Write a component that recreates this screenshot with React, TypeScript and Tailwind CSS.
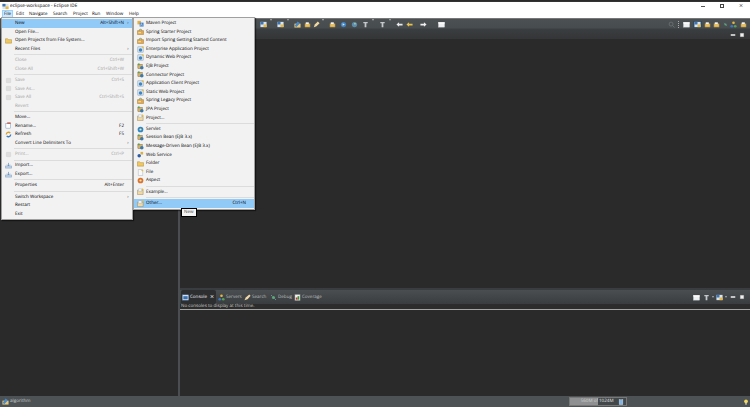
import React from 'react';

type MenuRow = { label?: string; key?: string; icon?: string; off?: boolean; arrow?: boolean; hot?: boolean; sep?: boolean };

const fileMenu: MenuRow[] = [
  { label: 'New', key: 'Alt+Shift+N', arrow: true, hot: true },
  { label: 'Open File...' },
  { label: 'Open Projects from File System...', icon: 'folder' },
  { label: 'Recent Files', arrow: true },
  { sep: true },
  { label: 'Close', key: 'Ctrl+W', off: true },
  { label: 'Close All', key: 'Ctrl+Shift+W', off: true },
  { sep: true },
  { label: 'Save', key: 'Ctrl+S', off: true, icon: 'disk' },
  { label: 'Save As...', off: true, icon: 'disk' },
  { label: 'Save All', key: 'Ctrl+Shift+S', off: true, icon: 'disk' },
  { label: 'Revert', off: true },
  { sep: true },
  { label: 'Move...' },
  { label: 'Rename...', key: 'F2', icon: 'rename' },
  { label: 'Refresh', key: 'F5', icon: 'refresh' },
  { label: 'Convert Line Delimiters To', arrow: true },
  { sep: true },
  { label: 'Print...', key: 'Ctrl+P', off: true, icon: 'disk' },
  { sep: true },
  { label: 'Import...', icon: 'import' },
  { label: 'Export...', icon: 'import' },
  { sep: true },
  { label: 'Properties', key: 'Alt+Enter' },
  { sep: true },
  { label: 'Switch Workspace', arrow: true },
  { label: 'Restart' },
  { label: 'Exit' },
];

const newMenu: MenuRow[] = [
  { label: 'Maven Project', icon: 'maven' },
  { label: 'Spring Starter Project', icon: 'spring' },
  { label: 'Import Spring Getting Started Content', icon: 'spring' },
  { label: 'Enterprise Application Project', icon: 'globe' },
  { label: 'Dynamic Web Project', icon: 'globe' },
  { label: 'EJB Project', icon: 'bean' },
  { label: 'Connector Project', icon: 'bean' },
  { label: 'Application Client Project', icon: 'globe' },
  { label: 'Static Web Project', icon: 'globe' },
  { label: 'Spring Legacy Project', icon: 'spring' },
  { label: 'JPA Project', icon: 'bean' },
  { label: 'Project...', icon: 'newdoc' },
  { sep: true },
  { label: 'Servlet', icon: 'servlet' },
  { label: 'Session Bean (EJB 3.x)', icon: 'bean' },
  { label: 'Message-Driven Bean (EJB 3.x)', icon: 'bean' },
  { label: 'Web Service', icon: 'service' },
  { label: 'Folder', icon: 'folder' },
  { label: 'File', icon: 'file' },
  { label: 'Aspect', icon: 'aspect' },
  { sep: true },
  { label: 'Example...', icon: 'newdoc' },
  { sep: true },
  { label: 'Other...', key: 'Ctrl+N', icon: 'newdoc', hot: true },
];

// tiny stand-ins for the eclipse 16px icons, they only show as colour blobs at this scale
function Ico({ kind, size = 7 }: { kind: string; size?: number }) {
  const s = { width: size, height: size };
  const svg = (children: React.ReactNode) => (
    <svg viewBox="0 0 16 16" style={s} className="shrink-0">
      {children}
    </svg>
  );
  switch (kind) {
    case 'folder':
      return svg(<path d="M1 4h5l2 2h7v8H1z" fill="#f0c860" stroke="#a8842c" />);
    case 'disk':
      return svg(<rect x="3" y="3" width="10" height="10" rx="1" fill="#dedede" stroke="#cfcfcf" />);
    case 'rename':
      return svg(<><rect x="2" y="3" width="11" height="11" fill="#fff" stroke="#5a88b8" /><path d="M5 1h8v3H5z" fill="#c0503c" /></>);
    case 'refresh':
      return svg(<><path d="M3 8a5 5 0 0 1 9-3" fill="none" stroke="#d8a030" strokeWidth="3" /><path d="M13 8a5 5 0 0 1-9 3" fill="none" stroke="#3c7cc0" strokeWidth="3" /></>);
    case 'import':
      return svg(<><path d="M1 9h14v5H1z" fill="#c4d6ea" stroke="#6a90b8" /><path d="M8 2v7M5 6l3 3 3-3" fill="none" stroke="#5a86b4" strokeWidth="1.5" /></>);
    case 'maven':
      return svg(<><rect x="1" y="2" width="8" height="8" fill="#e8b040" /><rect x="6" y="6" width="9" height="9" fill="#4a84c8" /><path d="M8 13l2-5 2 5" stroke="#fff" fill="none" /></>);
    case 'spring':
      return svg(<><path d="M1 6h14v9H1z" fill="#e0a850" stroke="#9c7430" /><path d="M5 6a3 3 0 0 1 6 0" fill="none" stroke="#7c8c50" strokeWidth="2" /><rect x="3" y="9" width="6" height="3" fill="#f4d890" /></>);
    case 'globe':
      return svg(<><rect x="2" y="2" width="12" height="12" fill="#e0e8f0" stroke="#6888a8" /><circle cx="8" cy="9" r="4" fill="#3c84c4" /><path d="M11 1h4v4h-4z" fill="#e8c048" /></>);
    case 'bean':
      return svg(<><rect x="2" y="3" width="10" height="10" fill="#d8b068" stroke="#7c6c4c" /><circle cx="11" cy="11" r="4" fill="#3c78a8" /><path d="M2 1h4v4H2z" fill="#58a058" /></>);
    case 'newdoc':
      return svg(<><path d="M1 5h13v10H1z" fill="#f0d8a0" stroke="#8c7c54" /><path d="M3 2h8v5H3z" fill="#fff" stroke="#98a4b0" /><path d="M13 0l1 2 2 1-2 1-1 2-1-2-2-1 2-1z" fill="#e8b830" /></>);
    case 'servlet':
      return svg(<><circle cx="8" cy="8" r="6.5" fill="#2f86c4" /><circle cx="8" cy="8" r="2.5" fill="#f2e6a8" /></>);
    case 'service':
      return svg(<><circle cx="5" cy="11" r="4" fill="#2c5ca8" /><path d="M8 2h6v6H8z" fill="#d8b048" /></>);
    case 'file':
      return svg(<><path d="M3 1h8l2 2v12H3z" fill="#f8f8f8" stroke="#a4aab0" /><path d="M12 0l1 2 2 1-2 1-1 2-1-2-2-1 2-1z" fill="#e8b830" /></>);
    case 'aspect':
      return svg(<><circle cx="8" cy="8" r="6.5" fill="#d8742c" /><circle cx="8" cy="8" r="2.5" fill="#f6e2c0" /></>);
    case 'win':
      return svg(<><rect x="1" y="3" width="14" height="11" fill="#eef0f2" stroke="#c8ccd0" /><rect x="1" y="3" width="14" height="3" fill="#fff" /></>);
    case 'persp':
      return svg(<><rect x="1" y="2" width="14" height="12" fill="#d8e4f0" /><path d="M1 2h7v6H1z" fill="#3c74b4" /><path d="M8 8h7v6H8z" fill="#e8b840" /></>);
    case 'tool':
      return svg(<><path d="M2 6h12v8H2z" fill="#e8c060" stroke="#8c7440" /><path d="M4 3h7v4H4z" fill="#f4f4f4" /></>);
    case 'run':
      return svg(<><circle cx="8" cy="8" r="6" fill="#3f84c4" /><path d="M6 5l5 3-5 3z" fill="#d8e8f4" /></>);
    case 'person':
      return svg(<><circle cx="8" cy="8" r="6" fill="#5c8cb0" /><circle cx="9" cy="6" r="2" fill="#a8d0a0" /></>);
    case 'pin':
      return svg(<><path d="M3 2h10v3H3zM6 5h4v9H6z" fill="#c4c8cc" /></>);
    case 'back':
      return svg(<path d="M1 8l6-5v3h8v4H7v3z" fill="#e8eaec" />);
    case 'backy':
      return svg(<path d="M1 8l6-5v3h8v4H7v3z" fill="#e8c050" />);
    case 'fwd':
      return svg(<path d="M15 8l-6-5v3H1v4h8v3z" fill="#f0f0f0" />);
    case 'pencil':
      return svg(<path d="M2 14l2-6 7-7 4 4-7 7z" fill="#f0d8a0" />);
    case 'min':
      return svg(<rect x="2" y="6" width="12" height="4" fill="#f0f0f0" />);
    case 'max':
      return svg(<rect x="3" y="3" width="10" height="10" fill="#f0f0f0" stroke="#888" />);
    case 'search':
      return svg(<><circle cx="7" cy="7" r="4.5" fill="none" stroke="#6c7072" strokeWidth="2" /><path d="M10 10l5 5" stroke="#6c7072" strokeWidth="2" /></>);
    case 'console':
      return svg(<><rect x="1" y="2" width="14" height="12" fill="#dce6f2" stroke="#5a88c0" /><rect x="3" y="5" width="10" height="7" fill="#3a70b0" /></>);
    case 'servers':
      return svg(<><circle cx="8" cy="4" r="3" fill="#e8b840" /><circle cx="4" cy="12" r="3" fill="#3c78c0" /><circle cx="12" cy="12" r="3" fill="#58a058" /></>);
    case 'flash':
      return svg(<path d="M1 14l3-6 8-7 3 3-7 8z" fill="#f0d8a8" />);
    case 'debug':
      return svg(<><circle cx="8" cy="8" r="3.5" fill="#58a878" /><path d="M3 3l2 2M13 13l-2-2" stroke="#8cb8d0" strokeWidth="2" /></>);
    case 'coverage':
      return svg(<><rect x="2" y="1" width="12" height="14" fill="#f0f0f0" stroke="#707070" /><rect x="4" y="8" width="4" height="5" fill="#c03030" /><rect x="8" y="5" width="4" height="8" fill="#389038" /></>);
    case 'bulb':
      return svg(<><circle cx="8" cy="6" r="5" fill="#f4d860" /><rect x="6" y="11" width="4" height="4" fill="#d8d8d8" /></>);
    case 'trash':
      return svg(<><rect x="3" y="2" width="10" height="13" fill="#86b4e0" stroke="#d8e4f0" /></>);
    case 'pkg':
      return svg(<><path d="M1 6h14v9H1z" fill="#e8c878" /><path d="M8 1l6 4-9 9-3-3z" fill="#4a88c8" /></>);
    default:
      return <span className="w-[7px] shrink-0" />;
  }
}

function Menu({ rows, className, iconX }: { rows: MenuRow[]; className: string; iconX: string }) {
  return (
    <div className={`absolute bg-[#f2f2f2] border border-[#a0a0a0] py-px shadow-[1px_1px_1px_rgba(0,0,0,0.5)] ${className}`}>
      {rows.map((r, i) =>
        r.sep ? (
          <div key={i} className="h-[2.7px] flex items-center pl-[12px]">
            <div className="h-px w-full bg-[#dcdcdc]" />
          </div>
        ) : (
          <div key={i} className={`h-[8.6px] flex items-center ${r.hot ? 'bg-[#91c9f7]' : ''} ${r.off ? 'text-[#a0a0a0]' : 'text-[#000]'}`}>
            <span className={`flex justify-center ${iconX}`}>{r.icon && <Ico kind={r.icon} />}</span>
            <span className="flex-1 whitespace-nowrap">{r.label}</span>
            {r.key && <span className="whitespace-nowrap">{r.key}</span>}
            <span className="w-[8px] text-center text-[#444]">{r.arrow ? '›' : ''}</span>
          </div>
        ),
      )}
    </div>
  );
}

function Drop() {
  return <span className="w-0 h-0 border-x-[1.5px] border-x-transparent border-t-[2px] border-t-[#a8acae]" />;
}

const menus = [
  { name: 'Edit', w: 'w-[13px]' },
  { name: 'Navigate', w: 'w-[24px]' },
  { name: 'Search', w: 'w-[20px]' },
  { name: 'Project', w: 'w-[19px]' },
  { name: 'Run', w: 'w-[14px]' },
  { name: 'Window', w: 'w-[23px]' },
  { name: 'Help', w: 'w-[15px]' },
];

export default function App() {
  return (
    <div
      className="relative w-[750px] h-[407px] overflow-hidden flex flex-col bg-[#2a2a2a] text-[4.55px] leading-none [text-rendering:geometricPrecision]"
      style={{ fontFamily: '"Open Sans", "Liberation Sans", sans-serif' }}
    >
      {/* title bar */}
      <div className="h-[9px] mt-px bg-white flex items-center pl-[2px] shrink-0 border-t border-t-[#333]">
        <Ico kind="persp" />
        <span className="ml-[1px] text-[#000] text-[4.7px]">eclipse-workspace - Eclipse IDE</span>
        <div className="ml-auto flex items-center gap-[15px] pr-[7px]">
          <span className="w-[4px] h-px bg-[#555]" />
          <span className="w-[4px] h-[4px] border border-[#444]" />
          <span className="text-[7px] text-[#333]">×</span>
        </div>
      </div>

      {/* menu bar */}
      <div className="h-[8px] bg-white flex items-center pl-[2px] text-[#000] shrink-0">
        <span className="w-[11px] h-full mr-[3px] flex items-center justify-center bg-[#cce8ff] border border-[#99d1ff]">File</span>
        {menus.map((m) => (
          <span key={m.name} className={m.w}>{m.name}</span>
        ))}
      </div>

      {/* toolbars */}
      <div className="shrink-0 h-[21px] border-t border-t-[#777] bg-[linear-gradient(#4b5052_0%,#474c4e_45%,#3b3e40_50%,#333537_100%)]">
        <div className="h-[11px] flex items-center pl-[256px] pr-[3px]">
          <span className="w-[4px]" />
          <Ico kind="persp" />
          <span className="ml-[3px] mr-[5px]"><Drop /></span>
          <Ico kind="persp" />
          <span className="ml-[3px] mr-[5px]"><Drop /></span>
          <Ico kind="pkg" />
          <span className="w-[3px]" />
          <Ico kind="tool" />
          <span className="w-[2px]" />
          <Ico kind="pencil" />
          <span className="ml-[2px] mr-[5px]"><Drop /></span>
          <Ico kind="tool" />
          <span className="w-[4px]" />
          <Ico kind="run" />
          <span className="w-[4px]" />
          <Ico kind="person" />
          <span className="w-[4px]" />
          <Ico kind="pin" />
          <span className="ml-[3px] mr-[5px]"><Drop /></span>
          <Ico kind="pin" />
          <span className="ml-[3px] mr-[5px]"><Drop /></span>
          <Ico kind="back" />
          <span className="w-[3px]" />
          <Ico kind="backy" />
          <span className="w-[7px]" />
          <Ico kind="fwd" />
          <span className="w-[11px]" />
          <Ico kind="win" />
          <div className="ml-auto flex items-center gap-[2px]">
            <Ico kind="search" />
            <span className="w-px h-[7px] ml-[1px] mr-[2px] border-l border-dotted border-l-[#aaa]" />
            <Ico kind="win" />
            <span className="bg-[#2f4a60] px-[1px] ml-[1px]"><Ico kind="persp" /></span>
            <Ico kind="tool" />
            <Ico kind="tool" />
            <span className="w-[5px] ml-[1px] flex justify-center"><Ico kind="debug" size={5} /></span>
            <Ico kind="servers" />
            <span className="ml-[1px]"><Ico kind="tool" /></span>
          </div>
        </div>
        <div className="h-[9px] flex items-center justify-end gap-[3px] pr-[5px]">
          <Ico kind="min" size={6} />
          <Ico kind="max" size={6} />
        </div>
      </div>

      {/* workbench */}
      <div className="flex-1 min-h-0 flex">
        <div className="w-[178px] bg-[#2a2a2a]" />
        <div className="w-[2px] bg-[#4a4e50]" />
        <div className="flex-1 flex flex-col min-w-0">
          <div className="flex-1 bg-[#2a2a2a]" />
          <div className="h-[2px] bg-[#3a3d3f]" />
          <div className="h-[106px] shrink-0 flex flex-col">
            <div className="h-[14px] shrink-0 flex items-center text-[#b8bcbe] bg-[linear-gradient(#4a4e50,#3a3d3f)] pl-px pr-[5px]">
              <div className="h-full w-[35px] flex items-center gap-[1px] pl-[1px] bg-[#2c2e30] text-[#f0f0f0] rounded-t-[2px]">
                <Ico kind="console" />
                <span>Console</span>
                <span className="ml-[2px] text-[7px] text-white">×</span>
              </div>
              <div className="flex items-center gap-[1px] ml-[2px] w-[26px]"><Ico kind="servers" />Servers</div>
              <div className="flex items-center gap-[1px] w-[26px]"><Ico kind="flash" />Search</div>
              <div className="flex items-center gap-[1px] w-[24px]"><Ico kind="debug" />Debug</div>
              <div className="flex items-center gap-[1px]"><Ico kind="coverage" />Coverage</div>
              <div className="ml-auto flex items-center gap-[2px]">
                <Ico kind="win" />
                <span className="ml-[1px]"><Ico kind="pin" /></span>
                <Drop />
                <Ico kind="persp" />
                <Drop />
                <span className="ml-[1.5px]"><Ico kind="min" size={6} /></span>
                <span className="ml-[1px]"><Ico kind="max" size={6} /></span>
              </div>
            </div>
            <div className="h-[5px] shrink-0 pl-[1px] flex items-center bg-[#2c2c2c] text-[#cccccc]">No consoles to display at this time.</div>
            <div className="h-px bg-[#a4a4a4] shrink-0" />
            <div className="flex-1 bg-[#2a2a2a]" />
          </div>
        </div>
      </div>

      {/* status bar */}
      <div className="h-[11px] shrink-0 flex items-center bg-[#4d5254] text-[#c8ccce] pl-[2px] pr-[1px]">
        <Ico kind="pkg" />
        <span className="ml-[1px]">algorithm</span>
        <div className="ml-auto mr-[116px] relative flex items-center h-[9px] w-[58px] border border-[#777] bg-[#42474a] text-[#e8e8e8]">
          <div className="w-[28px] h-full bg-[#8e9091] flex items-center justify-end text-[#d0d0d0]">560M of</div>
          <span className="ml-[1px]">1024M</span>
          <span className="ml-auto mr-[2px]"><Ico kind="trash" size={6} /></span>
        </div>
        <Ico kind="bulb" size={6} />
      </div>

      {/* open menus */}
      <Menu rows={fileMenu} className="left-px top-[17px] w-[132px]" iconX="w-[13px]" />
      <Menu rows={newMenu} className="left-[133px] top-[17px] w-[122px]" iconX="w-[12px]" />
      <div className="absolute left-[181px] top-[208px] h-[9px] px-[2px] flex items-center bg-[#f4f4f4] border border-black text-[#444]">New</div>
    </div>
  );
}
